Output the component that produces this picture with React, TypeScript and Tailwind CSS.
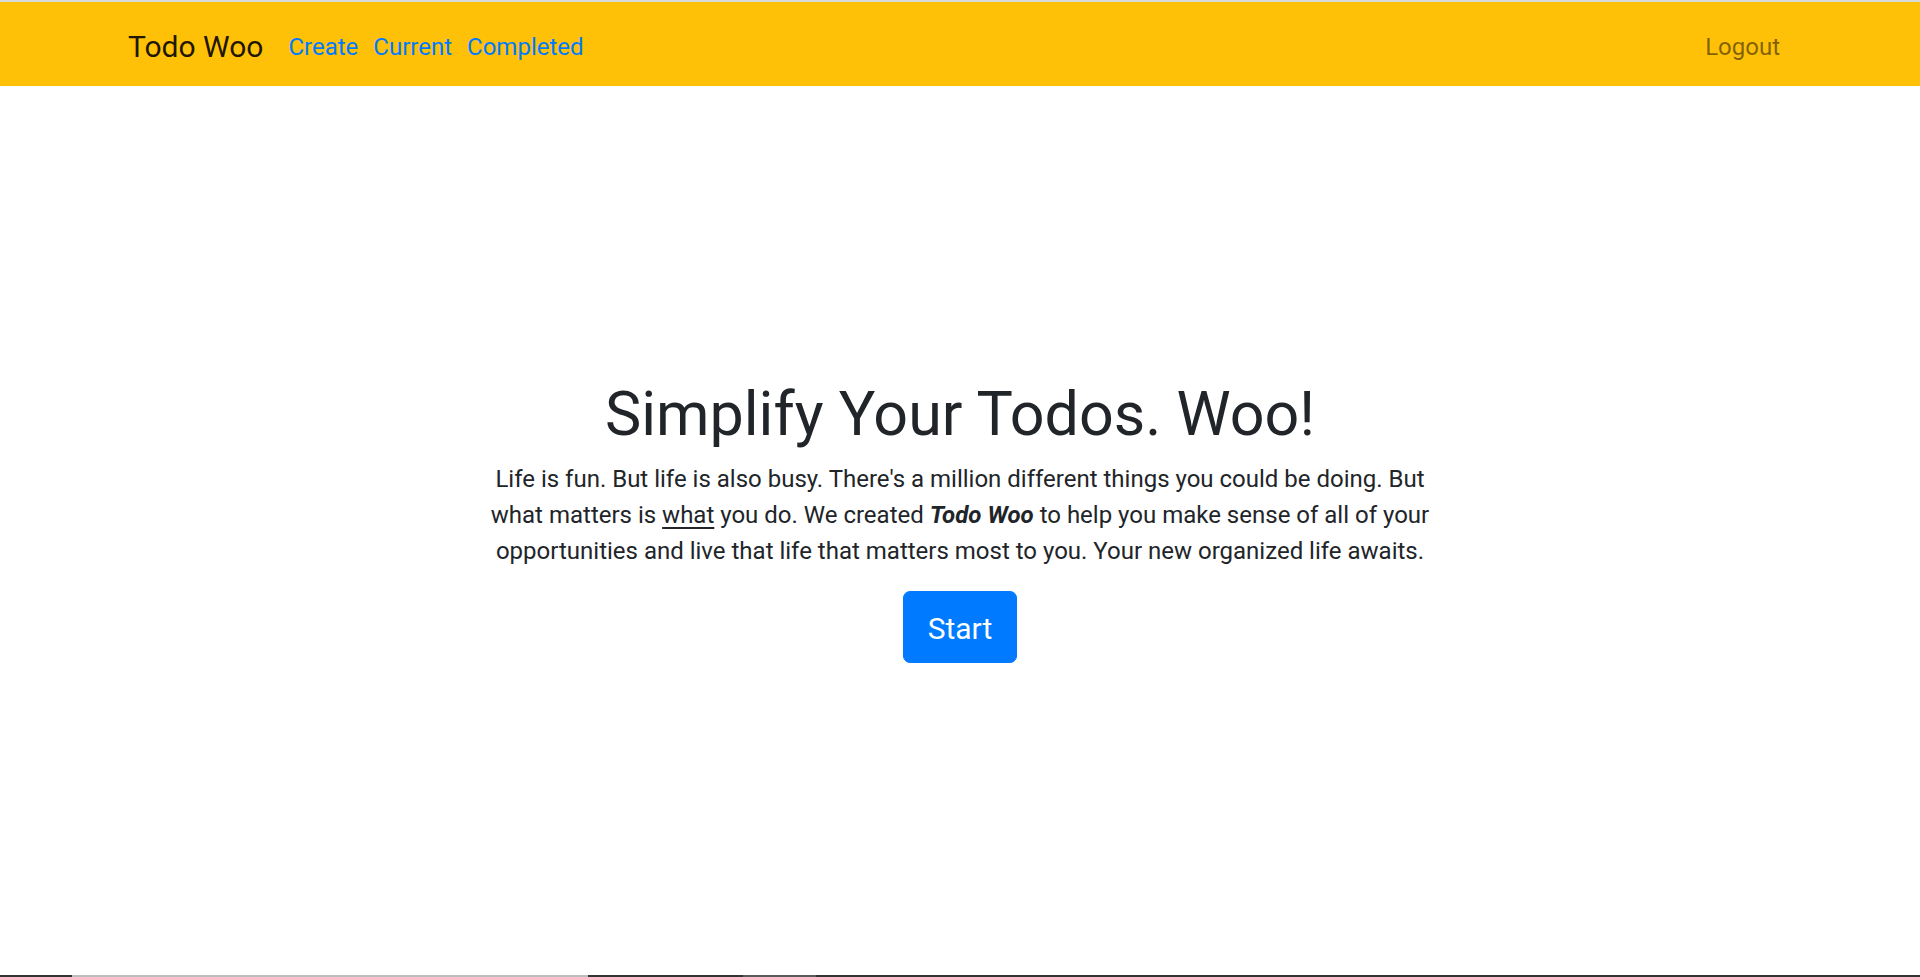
import React from "react";

export default function App() {
  return (
    <div className="w-[1920px] h-[977px] flex flex-col bg-white font-['Roboto',sans-serif] text-[#212529] overflow-hidden">
      <div className="h-[2px] bg-[#dadada] shrink-0" />
      <nav className="h-[84px] shrink-0 bg-[#ffc107] flex items-center pt-[5px] pl-[128px] pr-[140px]">
        <a className="text-[30px] leading-[45px] text-black/90 mr-[25px]">Todo Woo</a>
        <div className="flex items-center gap-[15px] text-[24px] leading-[36px] text-[#007bff]">
          <a>Create</a>
          <a>Current</a>
          <a>Completed</a>
        </div>
        <div className="ml-auto text-[24px] leading-[36px] text-black/50">
          <a>Logout</a>
        </div>
      </nav>
      <main className="flex-1 flex flex-col items-center pt-[292px]">
        <h1 className="text-[61px] leading-[72px] font-normal text-center">Simplify Your Todos. Woo!</h1>
        <p className="mt-[11px] text-[24px] leading-[36px] text-center whitespace-nowrap">
          Life is fun. But life is also busy. There's a million different things you could be doing. But
          <br />
          what matters is <u className="underline underline-offset-[4px]">what</u> you do. We created{" "}
          <b className="font-bold italic">Todo Woo</b> to help you make sense of all of your
          <br />
          opportunities and live that life that matters most to you. Your new organized life awaits.
        </p>
        <button className="mt-[22px] h-[72px] px-[24px] pt-[2px] border border-[#007bff] bg-[#007bff] text-white text-[30px] leading-[45px] rounded-[7px]">
          Start
        </button>
      </main>
      <div className="h-[2px] shrink-0 flex">
        <div className="w-[72px] bg-[#333333]" />
        <div className="w-[516px] bg-[#bdbdbd]" />
        <div className="w-[155px] bg-[#333333]" />
        <div className="w-[73px] bg-[#5a5a5a]" />
        <div className="flex-1 bg-[#333333]" />
      </div>
    </div>
  );
}
